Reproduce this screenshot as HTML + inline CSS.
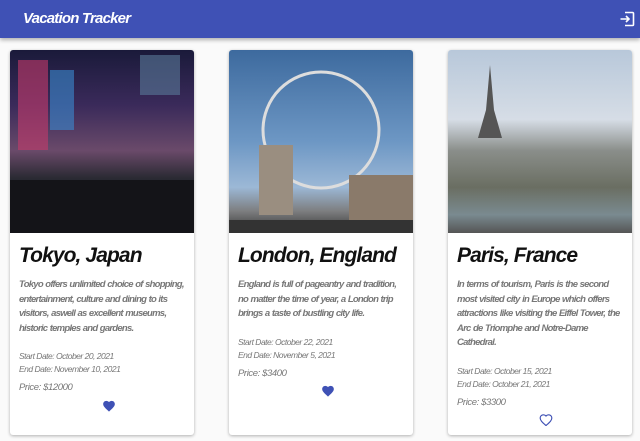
<!DOCTYPE html>
<html><head><style>
body{margin:0;width:640px;height:441px;background:#fafafa;font-family:"Liberation Sans",sans-serif;overflow:hidden;position:relative}
.bar{position:absolute;left:0;top:0;width:640px;height:38px;background:#3f51b5;box-shadow:0 2px 4px rgba(0,0,0,.3)}
.bar h1{margin:0;position:absolute;left:23px;top:10px;color:#fff;font-size:15px;font-style:italic;font-weight:bold;letter-spacing:-.8px}
.card{position:absolute;top:50px;width:184px;height:385px;background:#fff;border-radius:3px;box-shadow:0 1px 3px rgba(0,0,0,.3);overflow:hidden}
.img{height:183px;position:relative}
.c{padding:0 9px;font-style:italic;color:#666}
h2{margin:10px 0 0;font-size:21px;color:#111;font-weight:bold;letter-spacing:-.9px;line-height:26px}
.d{font-size:9.5px;line-height:14.5px;margin-top:9px;font-weight:bold;color:#777;letter-spacing:-.75px;word-spacing:.5px}
.dt{font-size:8.5px;line-height:13px;color:#777;letter-spacing:-.5px}
.p{font-size:9.5px;color:#777;margin-top:6px;letter-spacing:-.4px}
.h{position:absolute;width:14px;height:13px}
</style></head><body>
<div class="bar"><h1>Vacation Tracker</h1>
<svg style="position:absolute;left:619px;top:11px" width="16" height="16" viewBox="0 0 16 16"><path d="M6 1.5h7.5a1 1 0 0 1 1 1v11a1 1 0 0 1-1 1H6" fill="none" stroke="#fff" stroke-width="1.6"/><path d="M1.5 8h8M7 5l3 3-3 3" fill="none" stroke="#fff" stroke-width="1.6"/></svg></div>

<div class="card" style="left:10px"><div class="img" style="background:linear-gradient(180deg,#1a1a3a 0%,#3a2a5a 30%,#6a4a6a 55%,#2a2a33 70%,#111 100%)"><svg width="184" height="183" style="position:absolute;left:0;top:0"><rect x="8" y="10" width="30" height="90" fill="#c43a6a" opacity=".6"/><rect x="40" y="20" width="24" height="60" fill="#3a8ad0" opacity=".6"/><rect x="130" y="5" width="40" height="40" fill="#5a7a9a" opacity=".6"/><rect x="0" y="130" width="184" height="53" fill="#141418"/></svg></div>
<div class="c"><h2>Tokyo, Japan</h2><div class="d">Tokyo offers unlimited choice of shopping, entertainment, culture and dining to its visitors, aswell as excellent museums, historic temples and gardens.</div>
<div class="dt" style="margin-top:14px">Start Date: October 20, 2021<br>End Date: November 10, 2021</div><div class="p">Price: $12000</div></div>
<svg class="h" style="left:92px;top:349px" viewBox="0 0 24 22"><path d="M12 21.4l-1.5-1.3C5.4 15.4 2 12.3 2 8.5 2 5.4 4.4 3 7.5 3c1.7 0 3.4.8 4.5 2.1C13.1 3.8 14.8 3 16.5 3 19.6 3 22 5.4 22 8.5c0 3.8-3.4 6.9-8.5 11.5z" fill="#3f51b5"/></svg></div>

<div class="card" style="left:229px"><div class="img" style="background:linear-gradient(180deg,#3d6a9e 0%,#6d97c4 50%,#9cb8d6 75%,#7d7e80 88%,#333 100%)"><svg width="184" height="183"><circle cx="92" cy="80" r="58" fill="none" stroke="#ddd" stroke-width="3"/><rect x="30" y="95" width="34" height="70" fill="#9a8e80"/><rect x="120" y="125" width="64" height="45" fill="#8a7a6a"/><rect x="0" y="170" width="184" height="13" fill="#333"/></svg></div>
<div class="c"><h2>London, England</h2><div class="d">England is full of pageantry and tradition, no matter the time of year, a London trip brings a taste of bustling city life.</div>
<div class="dt" style="margin-top:14px">Start Date: October 22, 2021<br>End Date: November 5, 2021</div><div class="p">Price: $3400</div></div>
<svg class="h" style="left:92px;top:334px" viewBox="0 0 24 22"><path d="M12 21.4l-1.5-1.3C5.4 15.4 2 12.3 2 8.5 2 5.4 4.4 3 7.5 3c1.7 0 3.4.8 4.5 2.1C13.1 3.8 14.8 3 16.5 3 19.6 3 22 5.4 22 8.5c0 3.8-3.4 6.9-8.5 11.5z" fill="#3f51b5"/></svg></div>

<div class="card" style="left:448px"><div class="img" style="background:linear-gradient(180deg,#b8c8da 0%,#d6dde6 38%,#8a8e8a 55%,#6a6e62 75%,#7a8a90 90%,#555 100%)"><svg width="184" height="183"><path d="M42 15L38 60L30 88H54L46 60Z" fill="#555"/></svg></div>
<div class="c"><h2>Paris, France</h2><div class="d">In terms of tourism, Paris is the second most visited city in Europe which offers attractions like visiting the Eiffel Tower, the Arc de Triomphe and Notre-Dame Cathedral.</div>
<div class="dt" style="margin-top:14px">Start Date: October 15, 2021<br>End Date: October 21, 2021</div><div class="p">Price: $3300</div></div>
<svg class="h" style="left:91px;top:363px" viewBox="0 0 24 22"><path d="M12 21.4l-1.5-1.3C5.4 15.4 2 12.3 2 8.5 2 5.4 4.4 3 7.5 3c1.7 0 3.4.8 4.5 2.1C13.1 3.8 14.8 3 16.5 3 19.6 3 22 5.4 22 8.5c0 3.8-3.4 6.9-8.5 11.5z" fill="none" stroke="#3f51b5" stroke-width="2"/></svg></div>
</body></html>
